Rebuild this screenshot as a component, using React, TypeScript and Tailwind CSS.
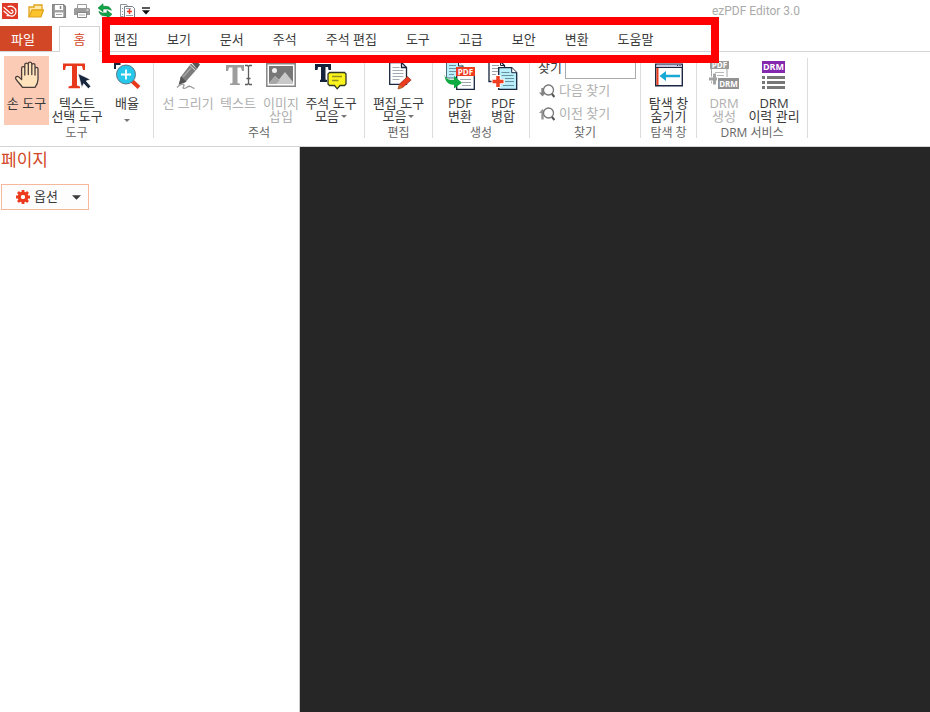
import { useState } from "react";
import type { ReactNode } from "react";
import clsx from "clsx";

const TABS = ["편집", "보기", "문서", "주석", "주석 편집", "도구", "고급", "보안", "변환", "도움말"];

function Icon({ children }: { children: ReactNode }) {
  return (
    <svg viewBox="0 0 32 32" className="h-8 w-8 shrink-0" aria-hidden="true">
      {children}
    </svg>
  );
}

function SmallIcon({ children }: { children: ReactNode }) {
  return (
    <svg viewBox="0 0 16 16" className="h-4 w-4" aria-hidden="true">
      {children}
    </svg>
  );
}

function LogoIcon() {
  return (
    <SmallIcon>
      <rect width="16" height="16" fill="#df3a27" />
      <path
        d="M2 4.5 8.2 10c1.2 1 2.8.2 2.8-1.2 0-1-.8-1.7-1.8-1.7M6 3.6C9.5 2 14 4.6 14 8.4c0 3.6-3.4 5.6-6.6 4.4L2 8.2M5 12.6h3"
        fill="none"
        stroke="#fff"
        strokeWidth="1.2"
        strokeLinecap="round"
      />
    </SmallIcon>
  );
}

function FolderIcon() {
  return (
    <SmallIcon>
      <path d="M1 14V4h5V2h8v5" fill="#ffe9a8" stroke="#e0a21b" strokeWidth="1.3" />
      <path d="M1 14 4 6.8h11.5L13 14z" fill="#fbc32d" stroke="#e0a21b" strokeWidth="1.2" />
    </SmallIcon>
  );
}

function SaveIcon() {
  return (
    <SmallIcon>
      <path d="M1.8 1.8h10.7l1.8 1.8v10.6H1.8z" fill="#a3a3a3" stroke="#858585" strokeWidth="1.5" />
      <path d="M4 2h8v5H4z" fill="#fff" />
      <path d="M9.5 3v3" stroke="#858585" strokeWidth="1.5" />
      <path d="M4 9.5h8.2V14H4z" fill="#fff" />
      <path d="M5 11.5h6" stroke="#a3a3a3" />
    </SmallIcon>
  );
}

function PrintIcon() {
  return (
    <SmallIcon>
      <path d="M3.5 1.5h9V6h-9z" fill="#fff" stroke="#9b9b9b" />
      <path d="M1 5h14l1 1v6H0V6z" fill="#9b9b9b" />
      <path d="M3.5 9.5h9v5h-9z" fill="#fff" stroke="#858585" />
      <path d="M5 12h6" stroke="#b0b0b0" />
      <path d="M12.5 7h2" stroke="#fff" />
    </SmallIcon>
  );
}

function SyncIcon() {
  return (
    <SmallIcon>
      <path d="M1 5 6 .8v2.5h3c3 0 4.8 1.7 5.4 4C12.7 6.3 11 6 9 6H6v2.8z" fill="#12a648" stroke="#0b7d35" strokeWidth=".6" />
      <path d="m15 11.3-5 4.1v-2.5H7.5c-3.2 0-5.2-2-5.6-4.6C3.5 9.7 5.2 10 7.2 10H10V7.5z" fill="#12a648" stroke="#0b7d35" strokeWidth=".6" />
    </SmallIcon>
  );
}

function CombineIcon() {
  return (
    <SmallIcon>
      <path d="M3.5 13.5h-3v-12h6l1 2M2 5.5h1M2 8.5h1M2 11.5h1" fill="none" stroke="#8d939b" />
      <path d="M4.5 3.5h8l2 2v9h-10z" fill="#fff" stroke="#747c86" />
      <path d="M6 5.5h5M6 12.5h7" stroke="#9aa0a7" />
      <path d="M9.5 6v5M7 8.5h5" stroke="#ef3b24" strokeWidth="1.5" />
    </SmallIcon>
  );
}

function MoreIcon() {
  return (
    <svg viewBox="0 0 10 10" className="h-2.5 w-2.5" aria-hidden="true">
      <path d="M1 2h8" stroke="#111" strokeWidth="1.4" />
      <path d="M1 4.2h8L5 8.5z" fill="#111" />
    </svg>
  );
}

function HandIcon() {
  return (
    <Icon>
      <path
        d="M11.5 27.3C9.5 24.5 6.5 21.5 4.8 18.8c-1-1.9 1.5-3.3 3.2-1.7l2.6 2.5V8.5c0-2.4 3.2-2.4 3.2 0V15 5c0-2.5 3.5-2.5 3.5 0v9.5V4c0-2.5 3.5-2.5 3.5 0v10.5v-9c0-2.4 3.2-2.4 3.2 0V15 9c0-2.3 3-2.3 3 0v10.5c0 3.2-1.3 5.5-3 7.8z"
        fill="#ffe3bd"
        stroke="#4a3d3a"
        strokeWidth="1.3"
        strokeLinejoin="round"
      />
    </Icon>
  );
}

function TextSelectIcon() {
  return (
    <Icon>
      <path d="M2 3.5h22V10h-2l-1-4h-5v19.5l3 1v1.8H7.5v-1.8l3.5-1V6H5l-1 4H2z" fill="#e8391d" />
      <path d="m17 13.5 12.5 6-4.3 1.5 4.6 5.3-2.4 2.5-4.7-5.1-1.9 4z" fill="#18263d" stroke="#fff" strokeWidth=".7" />
    </Icon>
  );
}

function ZoomIcon() {
  return (
    <Icon>
      <path d="M4 9V4h5.5" fill="none" stroke="#18263d" strokeWidth="2" />
      <path d="m21 21 7 6.5" stroke="#e8391d" strokeWidth="4" />
      <circle cx="15" cy="14.5" r="9.5" fill="#25c8ea" stroke="#5b7484" />
      <path d="M15 9.5v10M10 14.5h10" stroke="#fff" strokeWidth="1.8" />
    </Icon>
  );
}

function PenIcon() {
  return (
    <Icon>
      <path d="m20 3 4-2.5 4 4L25 9z" fill="#575757" />
      <path d="m19 3.5 6 5.5-11.5 13-6 2 1-6.8z" fill="#7c7c7c" />
      <path d="m17.5 5 6 5.5" stroke="#dedede" />
      <path d="m9 16.5 5.5 5.3-8 3.2z" fill="#555" />
      <path d="m19 8-8 9" stroke="#a5a5a5" strokeWidth="1.5" />
      <path d="M5 27.5c3-3.5 6.5-4 7-2.5.4 1.5-2 2.5-.5 3.3 2 1 4-2.5 6.5-2 1.7.4 2 1.5 4.5 2.2" fill="none" stroke="#9b9b9b" strokeWidth="1.3" />
    </Icon>
  );
}

function TextInsertIcon() {
  return (
    <Icon>
      <path d="M4 5h18v6h-2l-1-3.5h-3.5V23l2.5.8V25H8v-1.2l2.5-.8V7.5H7L6 11H4z" fill="#9d9d9d" />
      <path d="M23 5.5h2.5l1 1 1-1H30M23 24.5h2.5l1-1 1 1H30M26.5 6.5v17M24.5 18.5h4" fill="none" stroke="#5d5d5d" strokeWidth="1.3" />
    </Icon>
  );
}

function PictureIcon() {
  return (
    <Icon>
      <path d="M1.8 3.8h28.4v22.4H1.8z" fill="#fff" stroke="#858585" strokeWidth="1.5" />
      <path d="M4 6h24v18H4z" fill="#777" />
      <circle cx="9.5" cy="10.5" r="2.5" fill="#f1f1f1" />
      <path d="m4 23 6-7 4 3.5 6-7.5 8 10v2H4z" fill="#c9c9c9" />
      <path d="m10 16 4.5 4.5L11 24H4v-1z" fill="#a7a7a7" />
    </Icon>
  );
}

function CommentIcon() {
  return (
    <Icon>
      <path d="M0 4h16v6h-2.5L13 7h-2.5v12.5l1.5.5v2H5v-2l1-.5V7H3l-.5 3H0z" fill="#14233b" />
      <path d="M14.5 12.5h15L31 14v10l-1.5 1.5H25l-2.8 3.3-2.7-3.3h-5L13 24V14z" fill="#fbf31c" stroke="#303826" strokeWidth="1.3" />
      <path d="M17 16.5h10M17 20.5h6.5" stroke="#92901e" strokeWidth="1.5" />
    </Icon>
  );
}

function EditIcon() {
  return (
    <Icon>
      <path d="M6.7 2.5h11.8l5 5v16.8H6.7z" fill="#fff" stroke="#18263d" strokeWidth="1.3" />
      <path d="M18.5 2.5v5h5" fill="none" stroke="#18263d" strokeWidth="1.3" />
      <path d="M9.5 7.5h7M9.5 10.5h11M9.5 13.5h11M9.5 16.5h11M9.5 19.5h7" stroke="#a3abb5" />
      <path d="m24.5 16.5 3.7 3.5-8.5 7.5L15 29l1.5-5z" fill="#ec3a1e" stroke="#8c3527" strokeWidth=".7" />
      <path d="m16.5 24.5 3.2 3L15 29z" fill="#c96b28" />
    </Icon>
  );
}

function ConvertIcon() {
  return (
    <Icon>
      <path d="M2.5 18V1.5h12L19 6v12z" fill="#b8effa" stroke="#49707d" />
      <path d="M5 5.5h7M5 8.5h7M5 11.5h7M5 14.5h5" stroke="#6e929f" />
      <path d="M14.5 1.5V6h5" fill="#fff" stroke="#18263d" />
      <path d="M12.7 8.7h17.6v20.6H12.7z" fill="#fff" stroke="#18263d" strokeWidth="1.3" />
      <path d="M16 19.5h11M18 22.5h9M18 25.5h9" stroke="#9ca5ae" />
      <path d="M12 7h19v9H12z" fill="#ef3b1f" />
      <text x="21.5" y="14.5" textAnchor="middle" fill="#fff" fontSize="8" fontWeight="700">PDF</text>
      <path d="M.5 14c.5 4.5 4 6.5 9.500 5.7V16l8 6.8-8 5.7v-3.8C4.500 25.500.5 21 .5 14z" fill="#0fab42" />
    </Icon>
  );
}

function MergeIcon() {
  return (
    <Icon>
      <path d="M2 21.5v-20h11.500l4 4v16z" fill="#fff" stroke="#18263d" strokeWidth="1.3" />
      <path d="M13.5 1.5v4h4" fill="none" stroke="#18263d" />
      <path d="M5 5.5h7M5 8.5h6M5 11.5h6M5 14.5h4" stroke="#9ca5ae" />
      <path d="M11.7 7.7h13l5 5v16.6h-18z" fill="#b8effa" stroke="#18263d" strokeWidth="1.3" />
      <path d="M24.7 7.7v5h5" fill="#fff" stroke="#18263d" />
      <path d="M14.5 12.5h8M14.5 15.5h12M18 18.5h9M18 21.5h9M16 25.5h11" stroke="#68909d" />
      <path d="M11 15v13M4.5 21.5h13" stroke="#fff" strokeWidth="5" />
      <path d="M11 16v11M5.5 21.5h11" stroke="#f23e20" strokeWidth="3.5" />
    </Icon>
  );
}

function FindIcon({ up = false }: { up?: boolean }) {
  return (
    <SmallIcon>
      {up ? (
        <path d="M3.5 3 0 7h2.3v6.5h2.4V7H7z" fill="#969696" />
      ) : (
        <path d="M3.5 13.500 0 9.5h2.3V5h2.4v4.5H7z" fill="#858585" />
      )}
      <circle cx="9.5" cy="7" r="5" fill="#fff" stroke="#777" strokeWidth="1.3" />
      <path d="m13 11 2.5 3" stroke="#555" strokeWidth="2.2" />
    </SmallIcon>
  );
}

function NavPaneIcon() {
  return (
    <Icon>
      <path d="M2.7 4.2h26.6v21.6H2.7z" fill="#fff" stroke="#1b2640" strokeWidth="1.4" />
      <path d="M3.5 4.5h25V7h-25z" fill="#c8c8e2" />
      <path d="M3 7.5h26" stroke="#1b2640" />
      <path d="M24 5.5h1M26.5 5.5h1" stroke="#1b2640" />
      <path d="M3.5 8h2v17h-2z" fill="#ed3b20" />
      <path d="m6.5 16 6.5-5v3.8h14v2.4H13V21z" fill="#18a9d5" />
    </Icon>
  );
}

function DrmCreateIcon() {
  return (
    <Icon>
      <path d="M3.5 9v14H19V8" fill="#fff" stroke="#a5a5a5" />
      <path d="M7 12.5h9M8 15.5h8" stroke="#b9b9b9" />
      <path d="M2 1h19v8H2z" fill="#9b9b9b" />
      <text x="11.5" y="7.8" textAnchor="middle" fill="#fff" fontSize="8" fontWeight="700">PDF</text>
      <path d="M6.5 13v12M.5 19h12" stroke="#fff" strokeWidth="5" />
      <path d="M6.5 13.5v11M1 19h11" stroke="#a3a3a3" strokeWidth="3" />
      <path d="M9.5 17.5h22v12h-22z" fill="#929292" stroke="#fff" />
      <text x="20.5" y="26.5" textAnchor="middle" fill="#fff" fontSize="8" fontWeight="700">DRM</text>
    </Icon>
  );
}

function DrmListIcon() {
  return (
    <Icon>
      <path d="M4 1h23v12H4z" fill="#8428ad" />
      <text x="15.5" y="10.4" textAnchor="middle" fill="#fff" fontSize="9" fontWeight="700">DRM</text>
      <path d="M4 17.5h3M9 17.5h18M4 22.5h3M9 22.5h18M4 27.5h3M9 27.5h18" stroke="#777" strokeWidth="3" />
    </Icon>
  );
}

function GearIcon() {
  return (
    <svg viewBox="0 0 14 14" className="h-3.5 w-3.5" aria-hidden="true">
      <circle cx="7" cy="7" r="3.7" fill="none" stroke="#ec3a1e" strokeWidth="3.4" />
      <path
        d="M7 0v3M7 11v3M0 7h3M11 7h3M2 2l2 2M10 10l2 2M12 2l-2 2M4 10l-2 2"
        stroke="#ec3a1e"
        strokeWidth="2.8"
      />
      <circle cx="7" cy="7" r="2" fill="#fff" />
    </svg>
  );
}

function Caret({ className }: { className?: string }) {
  return (
    <svg viewBox="0 0 10 5" className={className} fill="currentColor" aria-hidden="true">
      <path d="M0 0h10L5 5z" />
    </svg>
  );
}

interface ToolProps {
  icon: ReactNode;
  lines: string[];
  className: string;
  active?: boolean;
  disabled?: boolean;
  menu?: "inline" | "below";
}

function Tool({ icon, lines, className, active, disabled, menu }: ToolProps) {
  return (
    <button
      type="button"
      disabled={disabled}
      aria-pressed={active}
      className={clsx(
        "flex h-[69px] shrink-0 flex-col items-center pt-1 text-[13px] leading-[13px] whitespace-nowrap",
        active && "bg-[#fbcbb5]",
        disabled ? "text-[#b0b0b0]" : "text-[#3a3a3a]",
        className,
      )}
    >
      {icon}
      <span className="mt-[5px] flex flex-col items-center">
        {lines.map((line, i) => (
          <span key={line} className="flex items-center">
            {line}
            {menu === "inline" && i === lines.length - 1 && (
              <Caret className="ml-0.5 h-[3px] w-1.5 text-[#777]" />
            )}
          </span>
        ))}
      </span>
      {menu === "below" && <Caret className="mt-[9px] h-[3px] w-1.5 text-[#777]" />}
    </button>
  );
}

function Group({ label, className, children }: { label: string; className?: string; children: ReactNode }) {
  return (
    <>
      <section aria-label={label} className="flex shrink-0 flex-col">
        <div className={clsx("flex h-[69px]", className)}>{children}</div>
        <p className="text-center text-xs leading-4 text-[#666]">{label}</p>
      </section>
      <div className="mt-0.5 h-20 w-px shrink-0 bg-[#dcdcdc]" />
    </>
  );
}

function QuickAccess() {
  return (
    <div className="flex items-center gap-[7px] pl-0.5">
      <span className="mr-[3px]">
        <LogoIcon />
      </span>
      <button type="button" aria-label="열기"><FolderIcon /></button>
      <button type="button" aria-label="저장"><SaveIcon /></button>
      <button type="button" aria-label="인쇄"><PrintIcon /></button>
      <button type="button" aria-label="변환"><SyncIcon /></button>
      <button type="button" aria-label="병합"><CombineIcon /></button>
      <button type="button" aria-label="빠른 실행 설정" className="-ml-0.5"><MoreIcon /></button>
    </div>
  );
}

function FindPanel() {
  const [query, setQuery] = useState("");

  return (
    <div className="flex flex-col pr-1 pl-2 text-[13px] text-[#b0b0b0]">
      <div className="flex h-[23px] items-center gap-1">
        <label htmlFor="find" className="w-[23px] whitespace-nowrap text-[#3a3a3a]">
          찾기
        </label>
        <input
          id="find"
          value={query}
          onChange={(e) => setQuery(e.target.value)}
          className="h-[23px] w-[71px] border border-[#ababab] bg-white px-1 text-xs text-[#333] outline-none"
        />
      </div>
      <button type="button" disabled className="flex h-[23px] items-center gap-1 pl-px">
        <FindIcon />
        다음 찾기
      </button>
      <button type="button" disabled className="flex h-[23px] items-center gap-1 pl-px">
        <FindIcon up />
        이전 찾기
      </button>
    </div>
  );
}

export default function App() {
  return (
    <div className="relative flex h-screen flex-col overflow-hidden bg-white font-['Open_Sans','Noto_Sans_CJK_KR',sans-serif] text-[#3a3a3a]">
      <header className="flex h-[26px] shrink-0 items-start justify-between">
        <div className="flex h-[21px] items-center">
          <QuickAccess />
        </div>
        <h1 className="mr-[130px] font-['Roboto',sans-serif] text-xs leading-[22px] text-[#aaa]">ezPDF Editor 3.0</h1>
      </header>

      <nav className="flex h-[26px] shrink-0 border-b border-[#d4d4d4] text-[13px] leading-[23px] whitespace-nowrap">
        <button type="button" className="w-[52px] shrink-0 bg-[#d24726] pt-0.5 pr-1.5 text-white">
          파일
        </button>
        <button
          type="button"
          aria-current="page"
          className="-mb-px ml-[7px] w-[41px] shrink-0 border border-b-0 border-[#d4d4d4] bg-white text-[#d24726]"
        >
          홈
        </button>
        <div className="ml-3.5 flex gap-[29px] pt-0.5">
          {TABS.map((tab) => (
            <button key={tab} type="button">
              {tab}
            </button>
          ))}
        </div>
      </nav>

      <div className="flex h-[95px] shrink-0 border-b border-[#d4d4d4] pt-1">
        <Group label="도구" className="px-1">
          <Tool icon={<HandIcon />} lines={["손 도구"]} className="w-[45px]" active />
          <Tool icon={<TextSelectIcon />} lines={["텍스트", "선택 도구"]} className="w-14" />
          <Tool icon={<ZoomIcon />} lines={["배율"]} className="w-11" menu="below" />
        </Group>
        <Group label="주석" className="pr-0.5 pl-2">
          <Tool icon={<PenIcon />} lines={["선 그리기"]} className="w-[52px]" disabled />
          <Tool icon={<TextInsertIcon />} lines={["텍스트"]} className="w-12" disabled />
          <Tool icon={<PictureIcon />} lines={["이미지", "삽입"]} className="w-[38px]" disabled />
          <Tool icon={<CommentIcon />} lines={["주석 도구", "모음"]} className="w-[62px]" menu="inline" />
        </Group>
        <Group label="편집">
          <Tool icon={<EditIcon />} lines={["편집 도구", "모음"]} className="w-[67px]" menu="inline" />
        </Group>
        <Group label="생성" className="px-[5px]">
          <Tool icon={<ConvertIcon />} lines={["PDF", "변환"]} className="w-11" />
          <Tool icon={<MergeIcon />} lines={["PDF", "병합"]} className="w-[42px]" />
        </Group>
        <Group label="찾기">
          <FindPanel />
        </Group>
        <Group label="탐색 창">
          <Tool icon={<NavPaneIcon />} lines={["탐색 창", "숨기기"]} className="w-[55px]" />
        </Group>
        <Group label="DRM 서비스" className="pr-1.5 pl-1">
          <Tool icon={<DrmCreateIcon />} lines={["DRM", "생성"]} className="w-[46px]" disabled />
          <Tool icon={<DrmListIcon />} lines={["DRM", "이력 관리"]} className="w-[54px]" />
        </Group>
      </div>

      <div className="flex min-h-0 flex-1">
        <aside className="w-[300px] shrink-0 border-r border-[#c8cccb] pl-px">
          <h2 className="text-[17px] leading-[26px] text-[#d24726]">페이지</h2>
          <button
            type="button"
            className="mt-[11px] flex h-[26px] w-[88px] items-center border border-[#f6b89c] bg-[#fdfdfd] pr-[7px] pl-3.5 text-[13px]"
          >
            <GearIcon />
            <span className="ml-1">옵션</span>
            <Caret className="ml-auto h-[5px] w-[9px]" />
          </button>
        </aside>
        <main className="flex-1 bg-[#262626]" />
      </div>

      {/* highlight drawn over the menu tabs */}
      <div className="pointer-events-none absolute top-[17px] left-[102px] h-[46px] w-[617px] border-8 border-[#ff0000]" />
    </div>
  );
}
